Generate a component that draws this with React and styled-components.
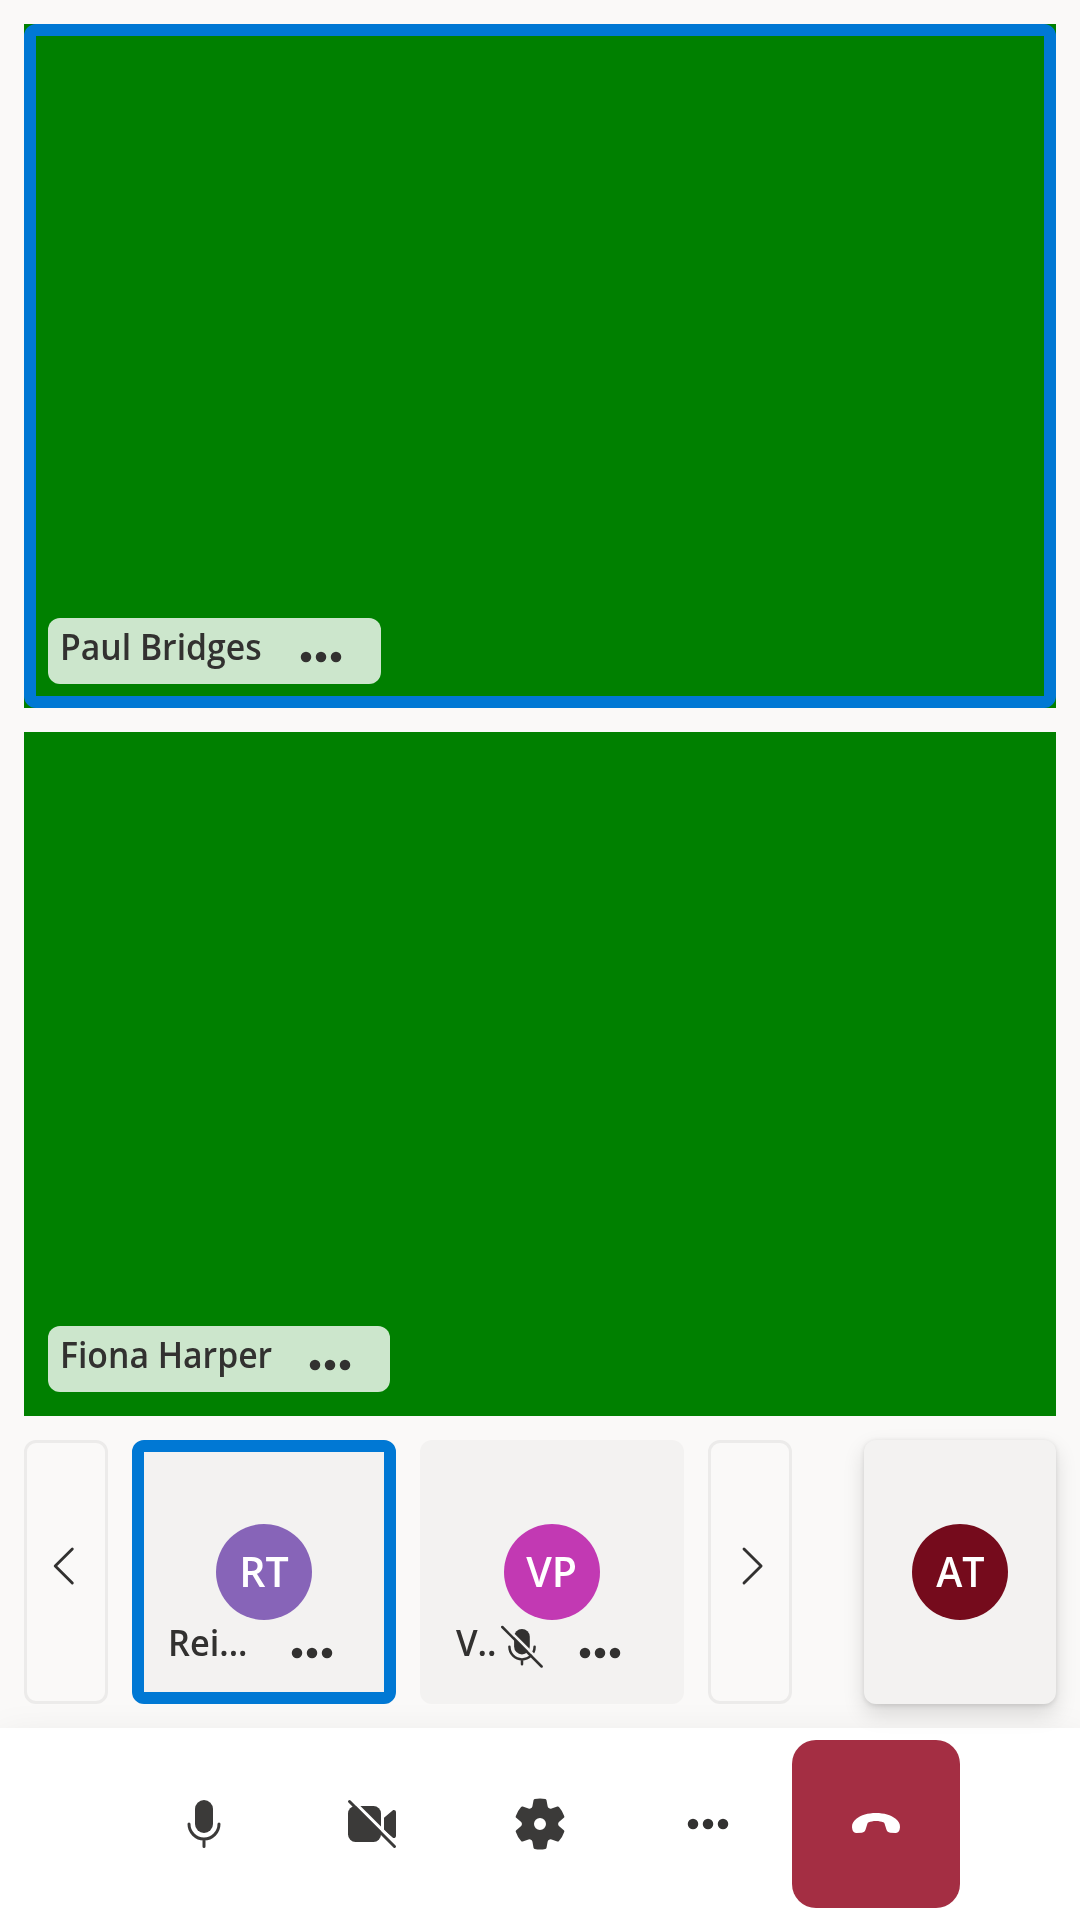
import React from 'react';
import styled, { createGlobalStyle } from 'styled-components';

const GlobalStyle = createGlobalStyle`
  * { box-sizing: border-box; }
  body {
    margin: 0;
    background: #faf9f8;
    color: #323130;
    font-family: 'Open Sans', 'Noto Sans', sans-serif;
  }
`;

const Screen = styled.main`
  display: flex;
  flex-direction: column;
  width: 1080px;
  height: 1920px;
  overflow: hidden;
  background: #faf9f8;
`;

const Stage = styled.section`
  flex: 1;
  display: flex;
  flex-direction: column;
  gap: 24px;
  padding: 24px;
`;

const VideoTile = styled.article`
  position: relative;
  flex: 1;
  display: flex;
  align-items: flex-end;
  padding: 24px;
  background: #008000;
`;

const SpeakingRing = styled.div`
  position: absolute;
  inset: 0;
  border: 12px solid #0078d4;
  border-radius: 12px;
`;

const NameTag = styled.div`
  position: relative;
  display: flex;
  align-items: flex-start;
  height: 66px;
  padding: 4px 30px 0 12px;
  border-radius: 12px;
  background: ${(p) => (p.$filled ? 'rgba(255, 255, 255, 0.8)' : 'transparent')};
`;

const Name = styled.span`
  display: block;
  width: ${(p) => p.$width}px;
  font-size: 35.4px;
  font-weight: 600;
  line-height: 48px;
  white-space: nowrap;
`;

const Fit = styled.span`
  display: inline-block;
  transform: scaleX(${(p) => p.$scale});
  transform-origin: 0 50%;
`;

const Icon = styled.svg`
  display: block;
  flex: none;
  width: ${(p) => p.$size || 60}px;
  height: ${(p) => p.$size || 60}px;
`;

const MoreButton = styled.button`
  display: block;
  flex: none;
  margin: 5px 0 0 30px;
  padding: 0;
  border: 0;
  background: none;
  color: #323130;
`;

const MutedMark = styled.span`
  flex: none;
  margin: 5px -6px 0 3px;
`;

const Filmstrip = styled.div`
  display: flex;
  flex: none;
  gap: 24px;
  height: 264px;
`;

const PageButton = styled.button`
  display: flex;
  justify-content: center;
  width: 84px;
  padding: 93px 0 0;
  border: 3px solid #ecebea;
  border-radius: 12px;
  background: transparent;
  color: #323130;
`;

const PersonTile = styled.article`
  position: relative;
  display: flex;
  flex-direction: column;
  align-items: center;
  width: 264px;
  padding-top: 84px;
  border-radius: 12px;
  background: #f3f2f1;
`;

const LocalTile = styled(PersonTile)`
  z-index: 2;
  width: 192px;
  margin-left: auto;
  box-shadow: 0 9.6px 21.6px rgba(0, 0, 0, 0.132), 0 1.8px 5.4px rgba(0, 0, 0, 0.108);
`;

const Avatar = styled.div`
  flex: none;
  display: flex;
  justify-content: center;
  width: 96px;
  height: 96px;
  border-radius: 50%;
  background: ${(p) => p.$color};
  color: #fff;
  font-size: 41.5px;
  font-weight: 600;
  line-height: 94px;

  span { transform: scaleX(${(p) => p.$scale}); }
`;

const TagDock = styled.div`
  position: absolute;
  left: 24px;
  bottom: 24px;
`;

const ControlBar = styled.footer`
  position: relative;
  flex: none;
  display: flex;
  justify-content: center;
  height: 192px;
  padding: 12px 0;
  background: #fff;
  box-shadow: 0 19.2px 43.2px rgba(0, 0, 0, 0.132);
`;

const ControlButton = styled.button`
  display: flex;
  align-items: center;
  justify-content: center;
  width: 168px;
  height: 168px;
  padding: 0;
  border: 0;
  border-radius: 24px;
  background: ${(p) => (p.$danger ? '#a42e43' : 'transparent')};
  color: ${(p) => (p.$danger ? '#fff' : '#3b3a39')};
`;

const More = () => (
  <Icon viewBox="0 0 20 20" fill="#323130">
    <circle cx="5" cy="10" r="1.75" />
    <circle cx="10" cy="10" r="1.75" />
    <circle cx="15" cy="10" r="1.75" />
  </Icon>
);

const Chevron = ({ d }) => (
  <Icon viewBox="0 0 20 20" fill="none" stroke="currentColor" strokeWidth="0.95" strokeLinecap="round" strokeLinejoin="round">
    <path d={d} />
  </Icon>
);

const Mic = () => (
  <Icon viewBox="0 0 20 20" fill="none" stroke="currentColor" strokeLinecap="round">
    <rect x="7" y="2" width="6" height="11" rx="3" fill="currentColor" stroke="none" />
    <path d="M5 10a5 5 0 0 0 10 0M10 15.2v2.3" />
  </Icon>
);

const MicOff = () => (
  <Icon $size={48} viewBox="0 0 48 48" fill="none" stroke="currentColor" strokeWidth="2.5" strokeLinecap="round">
    <mask id="mic-gap" maskUnits="userSpaceOnUse" x="0" y="0" width="48" height="48">
      <rect width="48" height="48" fill="#fff" stroke="none" />
      <path d="M6 2.2L46 42.2" stroke="#000" strokeWidth="2.7" />
    </mask>
    <g mask="url(#mic-gap)">
      <rect x="16.1" y="6" width="15.7" height="25.4" rx="7.85" fill="currentColor" stroke="none" />
      <path d="M11.4 23.8a12.6 12.6 0 0 0 25.2 0M24 37v4.2" />
    </g>
    <path d="M4.3 4L43.6 43.5" />
  </Icon>
);

const VideoOff = () => (
  <Icon viewBox="0 0 20 20" fill="currentColor">
    <mask id="cam-gap" maskUnits="userSpaceOnUse" x="0" y="0" width="20" height="20">
      <rect width="20" height="20" fill="#fff" />
      <path d="M2 .6L20 18.6" stroke="#000" strokeWidth="1.05" />
    </mask>
    <g mask="url(#cam-gap)">
      <rect x="2" y="4" width="11" height="12" rx="2.5" />
      <path d="M14 7.93l2.87-2.41c.45-.38 1.13-.06 1.13.53v7.93c0 .6-.7.92-1.15.53L14 12.1Z" />
    </g>
    <path d="M2.5 2.5l15 15" stroke="currentColor" strokeLinecap="round" />
  </Icon>
);

const Gear = () => (
  <Icon viewBox="0 0 20 20" fill="currentColor">
    <path fillRule="evenodd" d="M1.91 7.38A8.5 8.5 0 0 1 3.7 4.3a.5.5 0 0 1 .54-.13l1.92.68a1 1 0 0 0 1.32-.76l.36-2a.5.5 0 0 1 .4-.4 8.53 8.53 0 0 1 3.55 0c.2.04.35.2.38.4l.37 2a1 1 0 0 0 1.32.76l1.92-.68a.5.5 0 0 1 .54.13 8.5 8.5 0 0 1 1.78 3.08c.06.2 0 .4-.15.54l-1.56 1.32a1 1 0 0 0 0 1.52l1.56 1.32a.5.5 0 0 1 .15.54 8.5 8.5 0 0 1-1.78 3.08.5.5 0 0 1-.54.13l-1.92-.68a1 1 0 0 0-1.32.76l-.37 2a.5.5 0 0 1-.38.4 8.53 8.53 0 0 1-3.56 0 .5.5 0 0 1-.39-.4l-.36-2a1 1 0 0 0-1.32-.76l-1.92.68a.5.5 0 0 1-.54-.13 8.5 8.5 0 0 1-1.78-3.08.5.5 0 0 1 .15-.54l1.56-1.32a1 1 0 0 0 0-1.52L2.06 7.92a.5.5 0 0 1-.15-.54ZM8 10a2 2 0 1 0 4 0 2 2 0 0 0-4 0Z" />
  </Icon>
);

const HangUp = () => (
  <Icon viewBox="0 0 20 20" fill="currentColor">
    <path d="M10 6.33c2.7 0 5 .68 6.55 1.95C17.6 9.15 18.05 10 18 11.05l-.13.8c-.15.8-.72 1.22-1.45 1.17l-1.7-.1c-.66-.06-1.06-.42-1.25-1.05l-.6-1.95c-.08-.25-.2-.4-.45-.5C11.8 9.2 11 9 10 9s-1.8.2-2.42.42c-.25.1-.37.25-.45.5l-.6 1.95c-.19.63-.59.99-1.25 1.05l-1.7.1c-.73.05-1.3-.37-1.45-1.17l-.13-.8C1.95 10 2.4 9.15 3.45 8.28 5 7.01 7.3 6.33 10 6.33Z" />
  </Icon>
);

const Tag = ({ name, width, scale, filled, muted }) => (
  <NameTag $filled={filled}>
    <Name $width={width}><Fit $scale={scale}>{name}</Fit></Name>
    {muted && <MutedMark><MicOff /></MutedMark>}
    <MoreButton aria-label="More options"><More /></MoreButton>
  </NameTag>
);

export default function App() {
  return (
    <Screen>
      <GlobalStyle />
      <Stage>
        <VideoTile>
          <SpeakingRing />
          <Tag name="Paul Bridges" width={201} scale={0.953} filled />
        </VideoTile>
        <VideoTile>
          <Tag name="Fiona Harper" width={210} scale={0.953} filled />
        </VideoTile>
        <Filmstrip>
          <PageButton aria-label="Previous"><Chevron d="M12.1 4.3L6.4 10l5.7 5.7" /></PageButton>
          <PersonTile>
            <Avatar $color="#8764b8" $scale={0.99}><span>RT</span></Avatar>
            <SpeakingRing />
            <TagDock><Tag name="Rei..." width={84} scale={0.97} /></TagDock>
          </PersonTile>
          <PersonTile>
            <Avatar $color="#c239b3" $scale={0.99}><span>VP</span></Avatar>
            <TagDock><Tag name="V.." width={39} scale={0.98} muted /></TagDock>
          </PersonTile>
          <PageButton aria-label="Next"><Chevron d="M8 4.3l5.7 5.7L8 15.7" /></PageButton>
          <LocalTile>
            <Avatar $color="#750b1c" $scale={0.95}><span>AT</span></Avatar>
          </LocalTile>
        </Filmstrip>
      </Stage>
      <ControlBar>
        <ControlButton aria-label="Microphone"><Mic /></ControlButton>
        <ControlButton aria-label="Camera"><VideoOff /></ControlButton>
        <ControlButton aria-label="Settings"><Gear /></ControlButton>
        <ControlButton aria-label="More"><More /></ControlButton>
        <ControlButton aria-label="Leave" $danger><HangUp /></ControlButton>
      </ControlBar>
    </Screen>
  );
}
